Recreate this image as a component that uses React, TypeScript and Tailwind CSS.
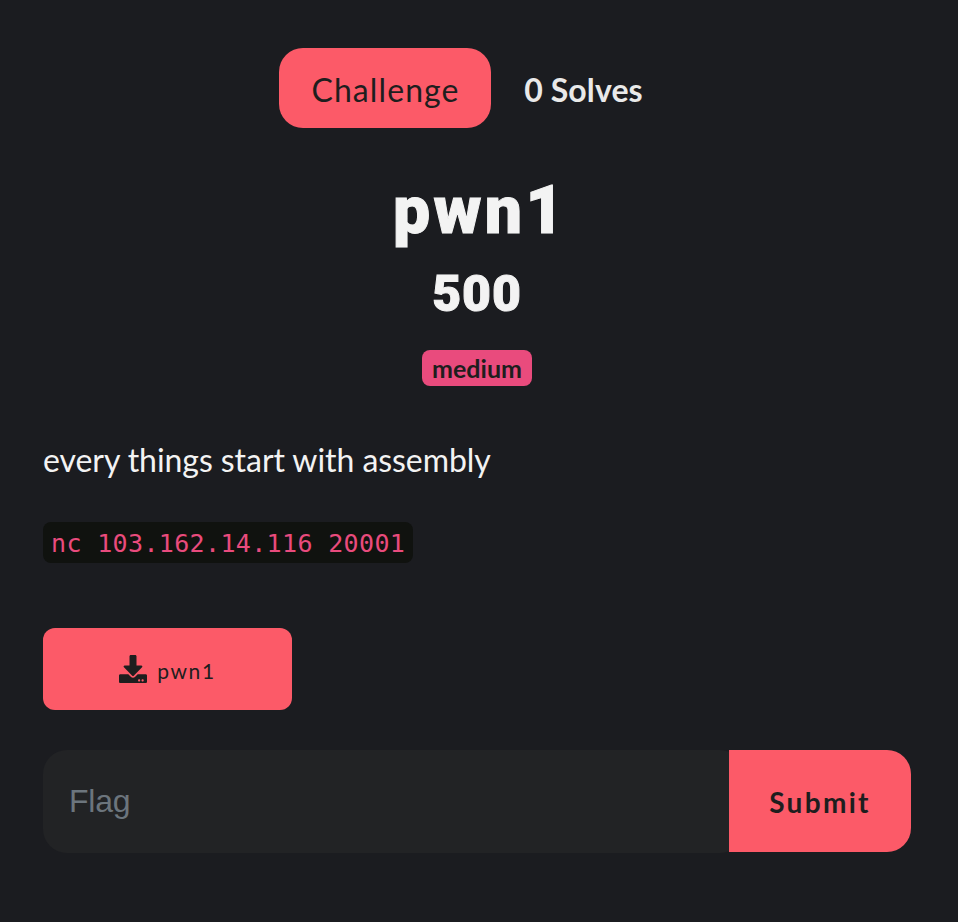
import { FaDownload } from "react-icons/fa";

function Tabs() {
  return (
    <nav className="flex h-20 justify-center pr-px font-[Lato,sans-serif] text-[32px]">
      <button className="h-20 w-[212px] rounded-[24px] bg-[#fc5a68] pt-1 pl-[2px] tracking-[1.1px] text-[#1e1e1e]">Challenge</button>
      <button className="h-20 w-[184px] pt-1 pl-[2px] text-[32px] font-bold tracking-[0.1px] text-[#e9e9e9]">0 Solves</button>
    </nav>
  );
}

export default function App() {
  return (
    <main className="h-[922px] w-[958px] overflow-hidden bg-[#1b1c20] pr-[47px] pl-[43px] pt-12 text-[#f3f3f3]">
      <Tabs />
      <header className="mt-[42px] flex flex-col items-center">
        <h1 className="h-[84px] pl-[6px] font-[Roboto,sans-serif] text-[66px] leading-[81px] font-black tracking-[3.4px] [-webkit-text-stroke:1px_#f3f3f3]">pwn1</h1>
        <h2 className="h-[76px] font-[Roboto,sans-serif] text-[50px] leading-[80px] font-black tracking-[0.9px] [-webkit-text-stroke:1px_#f3f3f3]">500</h2>
        <span className="mt-5 flex h-9 w-[110px] items-center justify-center rounded-lg bg-[#e94b7d] pt-0.5 font-[Lato,sans-serif] text-[25px] font-bold text-[#1e1e1e]">medium</span>
      </header>
      <p className="mt-[50px] h-12 font-[Lato,sans-serif] text-[32px] leading-[48px] tracking-[-0.06px] whitespace-nowrap">every things start with assembly</p>
      <code className="mt-[38px] flex h-[41px] w-[370px] items-center rounded-lg bg-[#10120f] pt-0.5 pl-2 font-['DejaVu_Sans_Mono',monospace] text-[25px] tracking-[0.35px] whitespace-nowrap text-[#e94b7d]">nc 103.162.14.116 20001</code>
      <button className="mt-[65px] flex h-[82px] w-[249px] items-center justify-center rounded-xl bg-[#fc5a68] pb-px font-[Lato,sans-serif] text-[21px] tracking-[1.6px] text-[#1e1e1e]">
        <FaDownload className="mr-[10px] size-7" />
        <span className="pt-1">pwn1</span>
      </button>
      <form className="mt-10 flex h-[103px] items-start">
        <input
          placeholder="Flag"
          className="h-[103px] w-[701px] rounded-[24px] bg-[#222325] px-[26px] font-['Liberation_Sans',sans-serif] text-[32px] tracking-[-0.2px] text-white outline-none placeholder:text-[#6c757d]"
        />
        <button type="button" className="z-10 -ml-[15px] h-[102px] w-[182px] rounded-r-[24px] bg-[#fc5a68] pt-0.5 font-[Lato,sans-serif] text-[28px] font-bold tracking-[2.3px] text-[#1e1e1e]">Submit</button>
      </form>
    </main>
  );
}
